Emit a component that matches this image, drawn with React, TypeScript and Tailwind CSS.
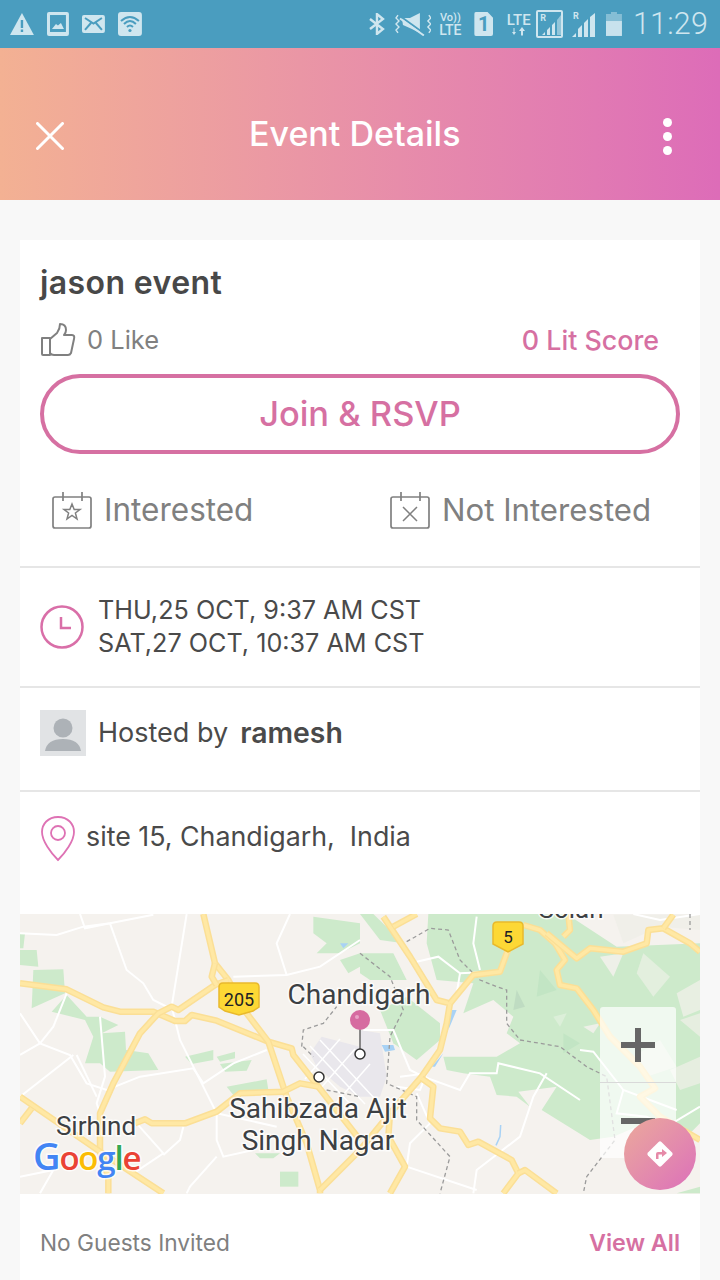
import React from "react";

const pts = (ox: number, s: string) =>
  s
    .trim()
    .split(/\s+/)
    .map((p) => {
      const [x, y] = p.split(",").map(Number);
      return `${ox + x / 3},${y / 3 - 4}`;
    })
    .join(" ");

// coordinates below were read off the reference, left half and right half of the map
const greensL = [
  "40,180 130,178 135,250 35,295",
  "0,120 50,120 55,170 0,165",
  "0,70 15,70 10,115 0,115",
  "95,305 140,255 200,320 240,320 295,345 245,370 315,365 318,420 385,430 415,480 270,485 240,460 195,460 220,380 195,330",
  "495,440 580,420 580,450 515,462",
  "590,440 645,425 645,445 600,455",
  "600,462 695,450 680,482 615,485",
  "620,530 740,508 745,540 640,555",
  "780,785 835,785 835,830 780,830",
  "705,730 780,730 760,745 720,745",
  "880,20 1020,40 1020,100 960,130 890,130 920,100 880,70",
  "960,150 1020,130 1020,170 985,190",
];
const greensR = [
  "0,130 100,130 140,210 30,210 0,190",
  "60,300 140,260 240,340 240,390 170,450 100,400",
  "0,12 40,12 130,100 60,90",
  "205,12 620,12 770,110 1020,100 1020,640 980,680 900,620 760,680 690,690 545,600 590,530 475,545 510,590 470,560 410,555 390,500 310,490 260,480 250,440 330,440 410,440 480,400 440,370 460,320 400,270 310,310 340,220 230,210 200,100",
  "950,850 1020,830 1020,850",
];
const facets = [
  { p: "760,14 1020,14 1020,60 900,50 790,100", c: "#f0efe9" },
  { p: "720,140 790,130 760,200", c: "#eef0e8" },
  { p: "850,130 930,200 880,260 830,190", c: "#e3efde" },
  { p: "950,250 1020,210 1020,300 970,320", c: "#e8efe2" },
  { p: "820,440 900,390 950,470 860,500", c: "#e3efde" },
  { p: "580,320 620,310 600,350", c: "#dcefd9" },
  { p: "470,240 495,290 460,300", c: "#bfdcc2" },
  { p: "670,350 720,340 700,370", c: "#eef0e8" },
  { p: "960,330 1020,310 1020,380", c: "#e6eee0" },
  { p: "540,180 590,240 530,260", c: "#c2e5c4" },
  { p: "610,370 660,400 610,430", c: "#c2e5c4" },
  { p: "930,480 1020,440 1020,520 960,540", c: "#e6eee0" },
];
const whiteL = [
  "0,70 110,75 190,50 270,40 400,14",
  "180,12 195,55 270,40 320,180 370,220 400,270 460,300",
  "500,12 455,290 480,390 545,520 590,610 590,690 610,740 700,720",
  "0,310 60,400 150,435 200,520 260,540 360,500 520,475 550,520 640,460 740,420",
  "60,400 0,435",
  "160,435 0,560",
  "140,250 100,350 60,400",
  "240,320 255,500 230,580 240,610",
  "170,435 230,560",
  "350,640 430,730 340,790",
  "490,650 480,690 430,735",
  "0,800 100,780 60,850",
  "590,610 770,650",
  "640,200 800,195 900,170 1020,90",
  "800,195 770,100 810,12",
  "590,740 510,830 500,850",
];
const whiteR = [
  "170,155 235,140 300,190 400,185",
  "300,190 290,250",
  "190,500 300,540 330,490 410,490 415,460 540,490 660,570",
  "560,490 520,560 500,620 480,680 350,780 340,850",
  "140,770 350,840",
  "140,770 150,700 210,640 170,550",
  "10,360 100,360 150,480 190,500",
  "790,540 770,610 860,620 920,650 1020,590",
  "660,420 700,425 790,540 950,600",
  "350,20 340,100 360,180",
  "120,500 200,490 180,540 110,530",
  "820,12 900,30 1020,12",
];
const yellowL = [
  "0,220 140,238 250,292 300,305 400,305 465,333 495,333 515,315 590,332 745,395 815,415 820,435 895,530 1020,690",
  "550,12 585,160 625,210 680,310 745,395 800,560 860,700 900,840 900,850",
  "265,850 265,800 240,725 240,610 280,520 360,370 415,310 455,290 475,300 585,225 625,210",
  "585,160 575,200 590,225",
  "0,560 240,725 430,850",
  "35,595 0,640",
  "345,640 375,628 395,640 495,640 590,605 660,550 790,545 840,520 895,530",
  "1020,720 900,840",
];
const yellowR = [
  "70,20 150,140 230,270 270,280 260,340 240,420 185,500 90,610 0,720",
  "270,280 340,195 420,185 440,130 445,120",
  "490,45 540,60 585,100 615,150 590,180 600,225 650,235 700,300 750,380 840,470 885,535 840,560 900,620 1020,690",
  "560,70 650,145 690,115 790,125 860,100 865,60 910,55 990,100 1020,125",
  "910,55 940,14",
  "185,505 220,530 210,625 240,655 300,665 325,705 355,695 455,750 475,790 430,850",
  "475,790 495,780 590,850",
  "90,610 85,680 135,770 90,850",
  "625,12 630,60 610,80",
  "100,50 170,12",
];
const dashL = ["845,410 850,360 910,340 950,290", "850,410 880,440", "920,540 1020,560"];
const dashR = [
  "990,12 990,60",
  "140,95 210,55 265,60 300,150 360,210 410,230 440,240 440,340 480,390 600,410 680,470 740,500 765,690 680,800 670,850",
  "0,130 90,200 130,300 90,380 80,520 170,560 170,630 270,740 240,850",
];

function Road({ ox, p, w = 6.5 }: { ox: number; p: string; w?: number }) {
  return (
    <>
      <polyline points={pts(ox, p)} fill="none" stroke="#fbdf96" strokeWidth={w} strokeLinejoin="round" />
      <polyline points={pts(ox, p)} fill="none" stroke="#ffe8a4" strokeWidth={w - 3} strokeLinejoin="round" />
    </>
  );
}

function Label({ x, y, size, children }: { x: number; y: number; size: number; children: React.ReactNode }) {
  return (
    <text
      x={x}
      y={y}
      textAnchor="middle"
      fontFamily="Roboto, sans-serif"
      fontSize={size}
      fill="#3c4043"
      stroke="#ffffff"
      strokeOpacity={0.8}
      strokeWidth={3}
      paintOrder="stroke"
    >
      {children}
    </text>
  );
}

function MapArt() {
  return (
    <svg viewBox="0 0 680 280" className="block w-full h-full">
      <rect width="680" height="280" fill="#f5f2ee" />
      {greensL.map((g) => (
        <polygon key={g} points={pts(0, g)} fill="#cdeacb" />
      ))}
      {greensR.map((g) => (
        <polygon key={g} points={pts(340, g)} fill="#cdeacb" />
      ))}
      {/* terrain facets */}
      {facets.map((f) => (
        <polygon key={f.p} points={pts(340, f.p)} fill={f.c} />
      ))}
      {/* city block */}
      <polygon points={pts(0, "905,380 1020,410 1020,560 960,530 890,470 870,430")} fill="#e9e7ec" />
      <polygon points={pts(340, "0,360 60,370 80,500 60,560 0,560")} fill="#e9e7ec" />
      <g stroke="#ffffff" strokeWidth="1.5">
        <path d="M290 132L345 190M300 126L355 185M283 140L335 195M320 125L285 165M335 135L300 175M350 150L315 190" fill="none" />
      </g>
      <polygon points={pts(340, "65,405 100,405 105,420 75,425")} fill="#a8d2f5" />
      <polygon points={pts(340, "270,300 290,300 265,360")} fill="#a8d2f5" />
      <polygon points={pts(340, "215,470 250,430 225,470")} fill="#a8d2f5" />
      <polyline points={pts(340, "422,645 420,680 408,706")} fill="none" stroke="#a8d2f5" strokeWidth="1.5" />
      <polygon points={pts(0, "960,100 985,100 970,115")} fill="#a8d2f5" />
      {whiteL.map((r) => (
        <polyline key={r} points={pts(0, r)} fill="none" stroke="#ffffff" strokeWidth="2" />
      ))}
      {whiteR.map((r) => (
        <polyline key={r} points={pts(340, r)} fill="none" stroke="#ffffff" strokeWidth="2" />
      ))}
      {dashL.map((r) => (
        <polyline key={r} points={pts(0, r)} fill="none" stroke="#9b9b9b" strokeWidth="1.3" strokeDasharray="4 3" />
      ))}
      {dashR.map((r) => (
        <polyline key={r} points={pts(340, r)} fill="none" stroke="#9b9b9b" strokeWidth="1.3" strokeDasharray="4 3" />
      ))}
      {yellowL.map((r) => (
        <Road key={r} ox={0} p={r} />
      ))}
      {yellowR.map((r) => (
        <Road key={r} ox={340} p={r} />
      ))}

      {/* shields */}
      <path d="M203 69H235Q239 69 239 73V93L233 97L219 101L205 97L199 93V73Q199 69 203 69Z" fill="#fdd835" stroke="#e9b92c" strokeWidth="1.5" />
      <text x="219" y="92" textAnchor="middle" fontFamily="Roboto, sans-serif" fontSize="18" fill="#202124">205</text>
      <path d="M477 8H499Q503 8 503 12V30L488 38L473 30V12Q473 8 477 8Z" fill="#fdd835" stroke="#e9b92c" strokeWidth="1.5" />
      <text x="488" y="29" textAnchor="middle" fontFamily="Roboto, sans-serif" fontSize="17" fill="#202124">5</text>

      <Label x={339} y={90} size={28}>Chandigarh</Label>
      <Label x={298} y={204} size={28}>Sahibzada Ajit</Label>
      <Label x={298} y={236} size={28}>Singh Nagar</Label>
      <Label x={76} y={221} size={26}>Sirhind</Label>
      <Label x={551} y={4} size={26}>Solan</Label>

      {/* pins */}
      <line x1="340" y1="110" x2="340" y2="135" stroke="#666666" strokeWidth="1.5" />
      <circle cx="340" cy="106" r="10" fill="#d66ba0" />
      <circle cx="337" cy="103" r="2" fill="#e9a3c6" />
      <circle cx="340" cy="140" r="5" fill="#ffffff" stroke="#333333" strokeWidth="1.5" />
      <circle cx="299" cy="163" r="5" fill="#ffffff" stroke="#333333" strokeWidth="1.5" />

      {/* google mark */}
      <text x="13" y="256" fontFamily="'Open Sans', sans-serif" fontSize="33" fontWeight="600" stroke="#ffffff" strokeWidth="3" strokeOpacity="0.8" paintOrder="stroke" letterSpacing="-1.2">
        <tspan fill="#4285f4" fontSize="38">G</tspan>
        <tspan fill="#ea4335">o</tspan>
        <tspan fill="#fbbc05">o</tspan>
        <tspan fill="#4285f4">g</tspan>
        <tspan fill="#34a853">l</tspan>
        <tspan fill="#ea4335">e</tspan>
      </text>
    </svg>
  );
}

function CalendarBase({ children }: { children: React.ReactNode }) {
  return (
    <svg width="42" height="38" viewBox="0 0 42 38" fill="none" stroke="#808080" strokeWidth="1.7">
      <path d="M2 8Q2 6 4 6H38Q40 6 40 8V35Q40 37 38 37H4Q2 37 2 35Z" />
      <path d="M12 1V10M31 1V10" />
      {children}
    </svg>
  );
}

function StatusIcons() {
  return (
    <div className="h-12 bg-[#4a9dbf] flex items-center pl-[10px] pr-3 shrink-0 text-[#cfe6ef]">
      <svg width="24" height="22" viewBox="0 0 24 22" fill="currentColor">
        <path d="M12 0L24 22H0Z" />
        <path d="M10.8 7H13.2V15H10.8ZM10.8 16.5H13.2V19H10.8Z" fill="#4a9dbf" />
      </svg>
      <svg className="ml-[13px]" width="22" height="24" viewBox="0 0 22 24" fill="currentColor">
        <rect width="22" height="24" rx="2" />
        <rect x="3" y="3" width="16" height="17" fill="#4a9dbf" />
        <path d="M5 17L9 12L11 13.5L14 11L17 17Z" />
      </svg>
      <svg className="ml-[13px]" width="23" height="18" viewBox="0 0 23 18" fill="currentColor">
        <rect width="23" height="18" rx="2" />
        <path d="M3 3L11.5 8.5L20 3M3 15L9 8M20 15L14 8" stroke="#4a9dbf" strokeWidth="2" fill="none" />
      </svg>
      <svg className="ml-[13px]" width="24" height="24" viewBox="0 0 24 24" fill="none">
        <rect width="24" height="24" rx="3" fill="currentColor" />
        <path d="M3 9Q12 1 21 9M6 12Q12 6 18 12M9 15Q12 12 15 15" stroke="#4a9dbf" strokeWidth="2" />
        <circle cx="12" cy="18.5" r="1.6" fill="#4a9dbf" />
      </svg>

      <svg className="ml-[227px]" width="16" height="22" viewBox="0 0 16 22" fill="none" stroke="currentColor" strokeWidth="2.4">
        <path d="M1 6L14 16L8 21V1L14 6L1 16" />
      </svg>
      <svg className="ml-[10px]" width="37" height="24" viewBox="0 0 37 24" fill="none" stroke="currentColor" strokeWidth="1.4">
        <path d="M3 3L1 6L4 9L1 12L4 15L1 18L3 21M34 3L36 6L33 9L36 12L33 15L36 18L34 21" />
        <path d="M7 6H15L25 1V21L17 17L8 13Z" fill="currentColor" stroke="none" />
        <path d="M5 4L30 22" stroke="#4a9dbf" strokeWidth="2" />
        <path d="M5 6.5L29 23.5" strokeWidth="2" />
      </svg>
      <div className="ml-[7px] w-[24px] flex flex-col items-center font-['Roboto',sans-serif] font-medium text-[11px] leading-[12px]">
        <span>Vo))</span>
        <span className="text-[14px]">LTE</span>
      </div>
      <div className="ml-[12px] w-[19px] h-[24px] bg-[#cfe6ef] rounded-[2px] [clip-path:polygon(0_0,70%_0,100%_25%,100%_100%,0_100%)] flex items-center justify-center font-['Roboto',sans-serif] font-bold text-[20px] text-[#4a9dbf]">
        1
      </div>
      <div className="ml-[13px] w-[25px] flex flex-col items-center font-['Roboto',sans-serif] font-medium text-[15px] leading-[14px]">
        <span>LTE</span>
        <svg width="14" height="9" viewBox="0 0 14 9" fill="currentColor">
          <path d="M2 8L0 5H1.5V1H2.5V5H4ZM10 0L13 4H11V8.5H9V4H7Z" />
        </svg>
      </div>
      <div className="relative ml-[5px] w-[27px] h-[28px] border-2 border-[#cfe6ef] rounded-[2px]">
        <span className="absolute left-[2px] top-0 font-['Roboto',sans-serif] font-bold text-[9px] leading-[12px]">R</span>
        <svg className="absolute left-[4px] bottom-[1px]" width="20" height="22" viewBox="0 0 20 22" fill="currentColor">
          <path d="M0 22L3 19V22ZM5 22V17L8 14V22ZM10 22V12L13 9V22Z" />
          <path d="M15 22V7L19 2V22Z" opacity="0.55" />
        </svg>
      </div>
      <div className="relative ml-[9px] w-[24px] h-[26px]">
        <span className="absolute left-[1px] top-[-1px] font-['Roboto',sans-serif] font-bold text-[9px] leading-[12px]">R</span>
        <svg className="absolute left-0 bottom-0" width="24" height="24" viewBox="0 0 24 24" fill="currentColor">
          <path d="M0 24L4 20V24ZM6 24V16L10 12V24ZM12 24V10L16 6V24ZM18 24V4L23 0V24Z" />
        </svg>
      </div>
      <svg className="ml-[10px]" width="16" height="24" viewBox="0 0 16 24" fill="currentColor">
        <path d="M5 0H11V2H16V9H0V2H5Z" opacity="0.45" />
        <rect y="9" width="16" height="15" opacity="0.95" />
      </svg>
      <span className="ml-[11px] font-['Roboto',sans-serif] font-light text-[30.5px] leading-none tracking-[0.2px]">11:29</span>
    </div>
  );
}

export default function App() {
  return (
    <div className="w-[720px] h-[1280px] overflow-hidden flex flex-col bg-[#f8f8f8] font-['Inter',sans-serif]">
      <StatusIcons />

      <div className="h-[152px] shrink-0 bg-linear-to-r from-[#f3b193] to-[#dd6cb8] flex items-center pt-[24px] pl-[36px] pr-[48px] text-white">
        <svg width="28" height="28" viewBox="0 0 28 28" stroke="#ffffff" strokeWidth="3" strokeLinecap="round">
          <path d="M1.5 1.5L26.5 26.5M26.5 1.5L1.5 26.5" />
        </svg>
        <div className="ml-[185px] text-[34px] font-medium leading-none mb-[4px]">Event Details</div>
        <div className="ml-auto flex flex-col gap-[5px]">
          <div className="w-[9px] h-[9px] rounded-full bg-white" />
          <div className="w-[9px] h-[9px] rounded-full bg-white" />
          <div className="w-[9px] h-[9px] rounded-full bg-white" />
        </div>
      </div>

      <div className="pt-10 px-5 flex-1">
        <div className="relative bg-white h-full flex flex-col">
          <div className="px-5 pt-6">
            <h1 className="text-[32px] leading-[38px] font-semibold tracking-[0.4px] text-[#484848]">jason event</h1>
            <div className="mt-[20px] h-[36px] flex items-center text-[#808080] text-[25.5px]">
              <svg width="36" height="34" viewBox="0 0 36 34" fill="none" stroke="#808080" strokeWidth="2" strokeLinejoin="round">
                <path d="M2 15H10V32H3Q2 32 2 31Z" />
                <path d="M10 16L17 10Q20 6 20 1Q26 1 26 7Q26 10 24 12H32Q35 12 34 16L31 30Q30 32 28 32H14Q11 32 10 30" />
              </svg>
              <span className="ml-[11px]">0 Like</span>
              <span className="ml-auto mr-[21px] text-[#d670a2] font-medium text-[26.8px]">0 Lit Score</span>
            </div>
            <button className="mt-[16px] w-full h-[80px] rounded-full border-4 border-[#d670a2] text-[#d670a2] text-[34.4px] font-medium flex items-center justify-center">
              Join &amp; RSVP
            </button>
            <div className="mt-[36px] h-[40px] flex items-center text-[#808080] text-[31.5px]">
              <div className="ml-[11px]">
                <CalendarBase>
                  <path d="M21 13L23.2 18.5H29L24.4 22L26 28L21 24.5L16 28L17.6 22L13 18.5H18.8Z" strokeWidth="1.5" />
                </CalendarBase>
              </div>
              <span className="ml-[11px] w-[285px]">Interested</span>
              <CalendarBase>
                <path d="M14 16L28 30M28 16L14 30" strokeWidth="1.5" />
              </CalendarBase>
              <span className="ml-[11px] text-[31.2px]">Not Interested</span>
            </div>
          </div>

          <div className="mt-[36px] h-[122px] shrink-0 border-y-2 border-[#e6e6e6] px-5 flex items-center">
            <svg width="44" height="44" viewBox="0 0 44 44" fill="none" stroke="#d96fa8" strokeWidth="2.5">
              <circle cx="22" cy="22" r="20.5" />
              <path d="M21 12V23H31" />
            </svg>
            <div className="ml-[14px] text-[25.2px] leading-[33px] text-[#4a4a4a]">
              <div>THU,25 OCT, 9:37 AM CST</div>
              <div>SAT,27 OCT, 10:37 AM CST</div>
            </div>
          </div>

          <div className="h-[104px] shrink-0 border-b-2 border-[#e6e6e6] px-5 flex items-center pb-[12px]">
            <div className="w-[46px] h-[46px] bg-[#e1e3e5] overflow-hidden">
              <svg width="46" height="46" viewBox="0 0 46 46" fill="#adb2b7">
                <circle cx="23" cy="18" r="9.5" />
                <path d="M5 41Q7 29 23 29Q39 29 41 41Z" />
              </svg>
            </div>
            <span className="ml-[12px] text-[27px] text-[#4a4a4a]">Hosted by</span>
            <span className="ml-[12px] text-[28.4px] font-semibold text-[#4a4a4a]">ramesh</span>
          </div>

          <div className="h-[122px] shrink-0 px-5 pt-[24px] flex items-start">
            <svg width="36" height="46" viewBox="0 0 36 46" fill="none" stroke="#de72b4" strokeWidth="1.8">
              <path d="M18 1C8 1 2 8 2 16C2 25 11 37 18 44C25 37 34 25 34 16C34 8 28 1 18 1Z" />
              <circle cx="18" cy="17" r="7" />
            </svg>
            <span className="ml-[10px] text-[26.8px] text-[#4a4a4a] whitespace-pre">site 15, Chandigarh,  India</span>
          </div>

          <div className="relative h-[280px] shrink-0">
            <MapArt />
            {/* zoom controls */}
            <div className="absolute left-[580px] top-[93px] w-[76px] h-[151px] rounded-[3px] bg-white/70 flex flex-col">
              <div className="h-[76px] border-b border-[#d9d9d9] flex items-center justify-center">
                <svg width="34" height="34" viewBox="0 0 34 34" fill="#666666">
                  <path d="M14 0H20V14H34V20H20V34H14V20H0V14H14Z" />
                </svg>
              </div>
              <div className="flex-1 flex items-center justify-center">
                <div className="w-[34px] h-[6px] bg-[#666666]" />
              </div>
            </div>
            {/* directions button */}
            <div className="absolute left-[604px] top-[204px] w-[72px] h-[72px] rounded-full bg-linear-to-br from-[#eba99a] to-[#dc6fb9] flex items-center justify-center">
              <svg width="30" height="30" viewBox="0 0 30 30">
                <rect x="5.5" y="5.5" width="19" height="19" rx="2" fill="#ffffff" transform="rotate(45 15 15)" />
                <path d="M11 20V15Q11 13 13 13H17V10L22 14L17 18V15.5H13.5V20Z" fill="#e68aa8" />
              </svg>
            </div>
          </div>

          <div className="flex-1 px-5 pt-[32px] flex justify-between items-center self-stretch h-[86px] max-h-[86px] pb-[20px]">
            <span className="text-[#808080] text-[22.7px]">No Guests Invited</span>
            <span className="text-[#d670a2] font-semibold text-[23.3px]">View All</span>
          </div>
        </div>
      </div>
    </div>
  );
}
